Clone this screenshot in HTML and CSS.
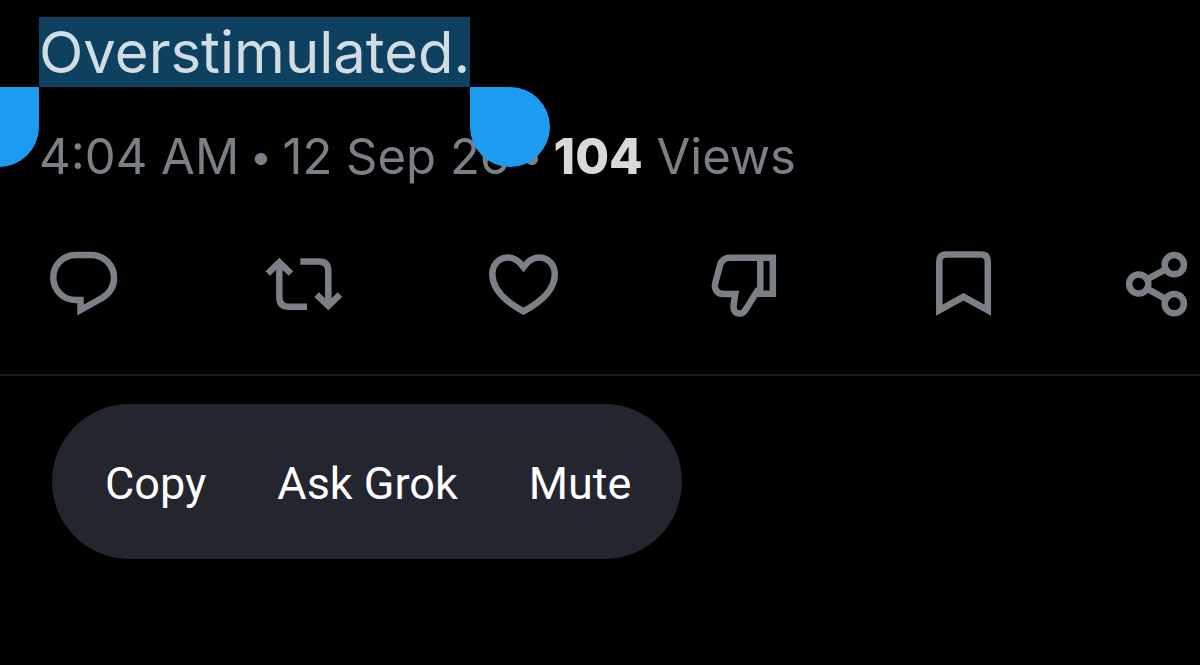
FILE: index.html
```html
<!DOCTYPE html>
<html lang="en">
<head>
<meta charset="UTF-8">
<title>Post</title>
<meta name="viewport" content="width=device-width, initial-scale=1.0">
<link rel="stylesheet" href="styles.css">
</head>

<body>

<article class="post">
<p class="post-text"><span class="selection">Overstimulated.<i class="handle handle-start"></i><i class="handle handle-end"></i></span></p>
<p class="meta">4:04 AM <span class="dot">•</span> 12 Sep 26 <span class="dot">•</span> <b>104</b> Views</p>

<div class="actions">
<div class="actions-main">
<button aria-label="Reply">
<svg viewBox="0 0 80 80"><path d="M32 56H36.5V66L58 54C66 49 70 43 70 34C70 21 60 11 47 11H32C19 11 9.3 21 9.3 33.5C9.3 46 19 56 32 56Z"/></svg>
</button>
<button aria-label="Repost">
<svg viewBox="0 0 80 80"><path d="M3.7 29.5L15.3 18.3L27 29.5M15.3 19V53Q15.3 62.8 25 62.8H43M36.3 17.5H55Q64.3 17.5 64.3 27V61M52.6 50.6L64.3 61.8L76 50.6"/></svg>
</button>
<button aria-label="Like">
<svg viewBox="0 0 80 80"><path d="M39.5 23C35 17 30 13.5 24 13.5C15 13.5 8.3 20.5 8.3 30C8.3 45 22 58 39.5 67.3C57 58 70.8 45 70.8 30C70.8 20.5 64 13.5 55 13.5C49 13.5 44 17 39.5 23Z"/></svg>
</button>
<button aria-label="Dislike">
<svg viewBox="0 0 80 80"><path d="M56.3 13.8H68.8V49.7H56.3ZM56.3 13.8H26C20.5 13.8 17 17 15.8 22L11.3 39C9.7 45 13 50 19.5 50H31.3L29.8 60C28.8 66 31 69.5 35.5 69.5C38.5 69.5 40.5 68 42 65L54.5 45"/></svg>
</button>
<button aria-label="Bookmark">
<svg viewBox="0 0 80 80"><path d="M15.3 66.2V17.5Q15.3 10.6 22.2 10.6H56.9Q63.8 10.6 63.8 17.5V66.2L39.5 52.8Z"/></svg>
</button>
</div>
<button aria-label="Share">
<svg viewBox="0 0 80 80"><circle cx="22.7" cy="40" r="9.6"/><circle cx="58.3" cy="20.7" r="9.6"/><circle cx="58.3" cy="59.7" r="9.6"/><path d="M31 35.4L50 25.2M31 44.6L50 55.2"/></svg>
</button>
</div>
</article>

<div class="menu">
<button>Copy</button>
<button>Ask Grok</button>
<button>Mute</button>
</div>

</body>
</html>
```
FILE: styles.css
```css
body{margin:0;font-family:Inter,"Liberation Sans",sans-serif;background:#000;color:#d9d9d9}
p{margin:0}
button{padding:0;border:none;background:none;cursor:pointer}
.post{padding-top:17px;border-bottom:2px solid #1a1c1e}
.post-text{padding-left:39px;font-size:58px;line-height:70px}
.selection{display:inline-block;position:relative;background:#0e4060;color:#d2dce3}
.handle{position:absolute;top:100%;width:80px;height:80px;background:#1d9bf0}
.handle-start{right:100%;border-radius:40px 0 40px 40px}
.handle-end{left:100%;border-radius:0 40px 40px 40px}
.meta{padding:40px 0 57px 39px;font-size:49px;line-height:60px;color:#7b8087}
.meta b{font-weight:800;color:#d9d9d9}
.dot{font-family:"Liberation Sans",sans-serif;font-size:45px;line-height:1}
.actions{display:flex;gap:112px;padding:0 4px 50px 44px}
.actions-main{flex:1;display:flex;justify-content:space-between}
.actions svg{display:block;width:80px;height:80px;fill:none;stroke:#7b8087;stroke-width:6.5}
.menu{display:flex;gap:71px;width:fit-content;margin:28px 52px;padding:4px 51px 0 53px;border-radius:78px;background:#24262f}
.menu button{font-family:Roboto,sans-serif;font-size:45px;line-height:151px;color:#fff}
```
